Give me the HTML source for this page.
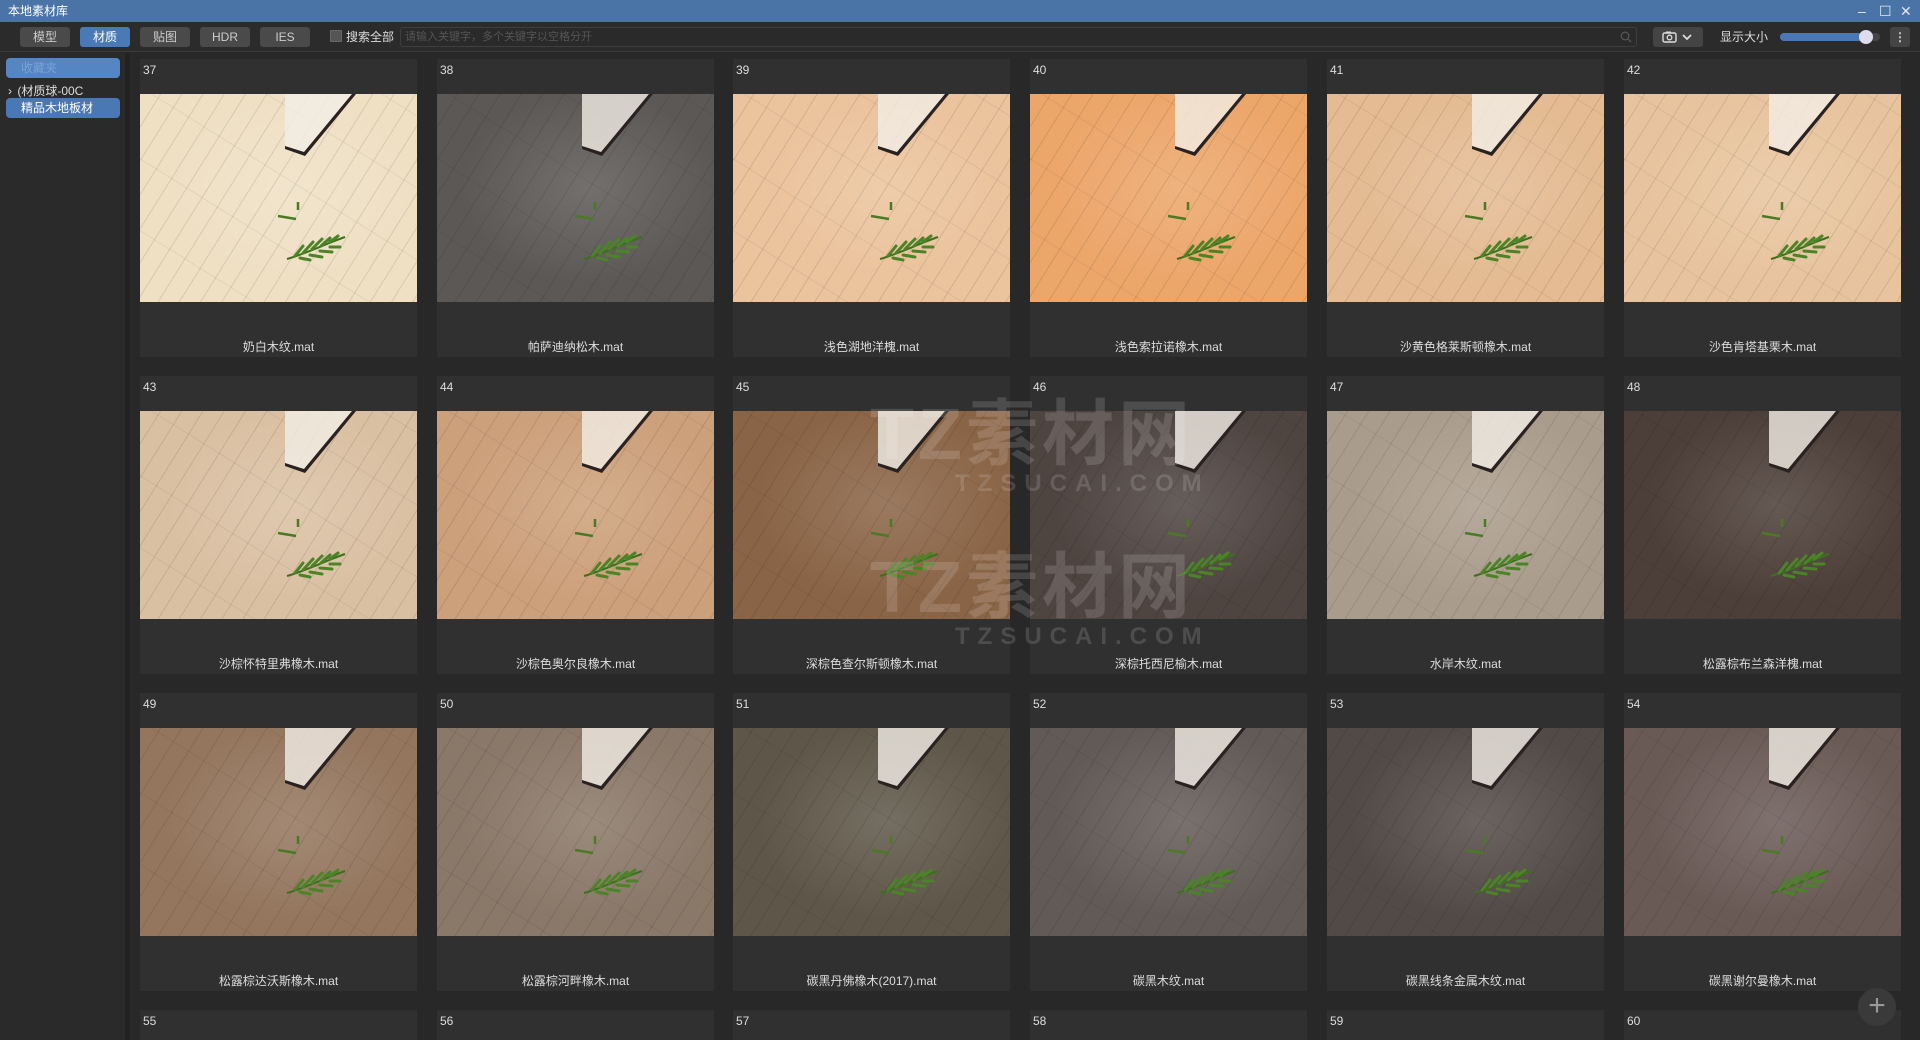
<!DOCTYPE html>
<html style="overflow:hidden;height:1040px"><head><meta charset="utf-8">
<style>
*{box-sizing:border-box;margin:0;padding:0}
body{width:1920px;height:1040px;overflow:hidden;background:#282828;font-family:"Liberation Sans","Noto Sans CJK SC",sans-serif;color:#ddd;position:relative}
.title{position:absolute;left:0;top:0;width:1920px;height:22px;background:#4a74a6;color:#fff;font-size:12px;line-height:22px;padding-left:8px}
.wc{position:absolute;top:0;height:22px;color:#dfe8f3;font-size:14px;line-height:22px}
.tb{position:absolute;left:0;top:22px;width:1920px;height:30px;background:#2b2b2b;border-bottom:1px solid #3a3a3a}
.btn{position:absolute;top:5px;height:20px;width:50px;background:#4a4a4a;border-radius:3px;color:#ccc;font-size:12px;line-height:20px;text-align:center}
.btn.on{background:#4a7ab5;color:#fff}
.cb{position:absolute;left:330px;top:8px;width:12px;height:12px;background:#555;border:1px solid #666}
.lbl{position:absolute;top:5px;font-size:12px;line-height:20px;color:#ddd}
.search{position:absolute;left:400px;top:5px;width:1237px;height:20px;border:1px solid #3e3e3e;border-radius:3px;background:#2a2a2a;color:#555;font-size:11px;line-height:18px;padding-left:4px}
.left{position:absolute;left:0;top:53px;width:130px;height:987px;background:#2a2a2a;border-right:5px solid #222}
.li{position:absolute;left:6px;width:114px;height:20px;border-radius:4px;background:#4a78b4;font-size:12px;line-height:20px;padding-left:15px;color:#fff;white-space:nowrap;overflow:hidden}
.card{position:absolute;width:277px;height:298px;background:#303030;overflow:hidden}
.num{position:absolute;left:3px;top:4px;font-size:12px;color:#ddd}
.tile{position:absolute;left:0;top:35px;width:277px;height:208px;overflow:hidden}
.tile .pl{position:absolute;inset:0;background:repeating-linear-gradient(122deg,transparent 0 17px,rgba(0,0,0,.10) 17px 18px),repeating-linear-gradient(32deg,transparent 0 60px,rgba(0,0,0,.06) 60px 61px)}
.tile svg{position:absolute;left:0;top:0}
.name{position:absolute;left:0;width:277px;top:281px;text-align:center;font-size:12px;color:#ddd;line-height:14px}
.wm{position:absolute;color:rgba(255,255,255,.14);font-weight:bold;font-family:"Liberation Sans","Noto Sans CJK SC",sans-serif}
</style></head><body>
<div class="title">本地素材库</div>
<div class="wc" style="left:1858px">–</div><div class="wc" style="left:1879px">☐</div><div class="wc" style="left:1900px">✕</div>
<div class="tb">
<div class="btn" style="left:20px">模型</div>
<div class="btn on" style="left:80px">材质</div>
<div class="btn" style="left:140px">贴图</div>
<div class="btn" style="left:200px">HDR</div>
<div class="btn" style="left:260px">IES</div>
<div class="cb"></div><div class="lbl" style="left:346px">搜索全部</div>
<div class="search">请输入关键字，多个关键字以空格分开<svg style="position:absolute;right:4px;top:3px" width="12" height="12" viewBox="0 0 12 12"><circle cx="5" cy="5" r="3.8" fill="none" stroke="#555" stroke-width="1.3"/><path d="M8 8l3 3" stroke="#555" stroke-width="1.3"/></svg></div>
<div class="btn" style="left:1653px;width:50px;background:#444"><svg width="50" height="20" viewBox="0 0 50 20"><rect x="10" y="6" width="13" height="9" rx="1.5" fill="none" stroke="#ddd" stroke-width="1.4"/><rect x="13" y="4.5" width="5" height="2" fill="#ddd"/><circle cx="16.5" cy="10.5" r="2.3" fill="none" stroke="#ddd" stroke-width="1.3"/><path d="M30 8l4 4 4-4" fill="none" stroke="#ddd" stroke-width="1.8"/></svg></div>
<div class="lbl" style="left:1720px">显示大小</div>
<div style="position:absolute;left:1780px;top:11px;width:100px;height:8px;border-radius:4px;background:#444"><div style="width:86px;height:8px;border-radius:4px;background:#4a78b4"></div><div style="position:absolute;left:79px;top:-3px;width:14px;height:14px;border-radius:7px;background:#dde"></div></div>
<div class="btn" style="left:1890px;width:20px;background:#444;font-weight:bold">⋮</div>
</div>
<div class="left">
<div class="li" style="top:5px;background:#5585c2;color:#7aa3d6">收藏夹</div>
<div style="position:absolute;left:8px;top:29px;font-size:12px;color:#ddd;white-space:nowrap">› <span style="margin-left:2px">(材质球-00C</span></div>
<div class="li" style="top:45px">精品木地板材</div>
</div>
<div id="grid"></div>
<div class="wm" style="left:870px;top:375px;font-size:72px;letter-spacing:4px">TZ素材网</div>
<div class="wm" style="left:955px;top:470px;font-size:24px;letter-spacing:8px">TZSUCAI.COM</div>
<div class="wm" style="left:870px;top:528px;font-size:72px;letter-spacing:4px">TZ素材网</div>
<div class="wm" style="left:955px;top:623px;font-size:24px;letter-spacing:8px">TZSUCAI.COM</div>
<div style="position:absolute;left:1858px;top:988px;width:38px;height:38px;border-radius:19px;background:#3a3a3a;color:#999;font-size:30px;line-height:36px;text-align:center">+</div>
<script>
var cols=[140,437,733,1030,1327,1624],rows=[59,376,693,1010];
var data=[
["奶白木纹.mat","#efe0c4"],["帕萨迪纳松木.mat","#5c5856"],["浅色湖地洋槐.mat","#ebc39c"],["浅色索拉诺橡木.mat","#eca66a"],["沙黄色格莱斯顿橡木.mat","#e4bb92"],["沙色肯塔基栗木.mat","#e8c49e"],
["沙棕怀特里弗橡木.mat","#dac0a2"],["沙棕色奥尔良橡木.mat","#cca07a"],["深棕色查尔斯顿橡木.mat","#8a6446"],["深棕托西尼榆木.mat","#4e4440"],["水岸木纹.mat","#aa9c8c"],["松露棕布兰森洋槐.mat","#4c3e38"],
["松露棕达沃斯橡木.mat","#94765e"],["松露棕河畔橡木.mat","#8a7868"],["碳黑丹佛橡木(2017).mat","#5e5648"],["碳黑木纹.mat","#625a56"],["碳黑线条金属木纹.mat","#524a46"],["碳黑谢尔曼橡木.mat","#6a5a56"]];
var h="";
for(var r=0;r<4;r++)for(var c=0;c<6;c++){var i=r*6+c,n=37+i;
h+='<div class="card" style="left:'+cols[c]+'px;top:'+rows[r]+'px;'+(r==3?'height:30px':'')+'"><div class="num">'+n+'</div>';
if(r<3){var d=data[i];
h+='<div class="tile" style="background:radial-gradient(ellipse at 55% 45%,rgba(255,255,255,.14),transparent 60%),'+d[1]+'"><div class="pl"></div><svg width="277" height="208" viewBox="0 0 277 208"><polygon points="145,0 215,0 165,60 145,55" fill="#f2ede6" opacity=".8"/><polygon points="145,55 165,62 216,0 212,0 164,58 145,52" fill="#2a2220"/><path d="M147 165 C165 160 185 150 205 143" stroke="#3f6e1e" stroke-width="2" fill="none"/><path d="M155 162l8-10M163 159l10-11M172 155l10-10M181 152l9-8M190 148l8-6M160 164l10 2M170 161l12 2M180 157l12 1M190 153l10 0" stroke="#4a8426" stroke-width="3" stroke-linecap="round"/><path d="M138 122l18 3M158 108l0 8" stroke="#4a7a24" stroke-width="2.5"/></svg></div>';
h+='<div class="name">'+d[0]+'</div>';}
h+='</div>';}
document.getElementById("grid").innerHTML=h;
</script>
</body></html>
